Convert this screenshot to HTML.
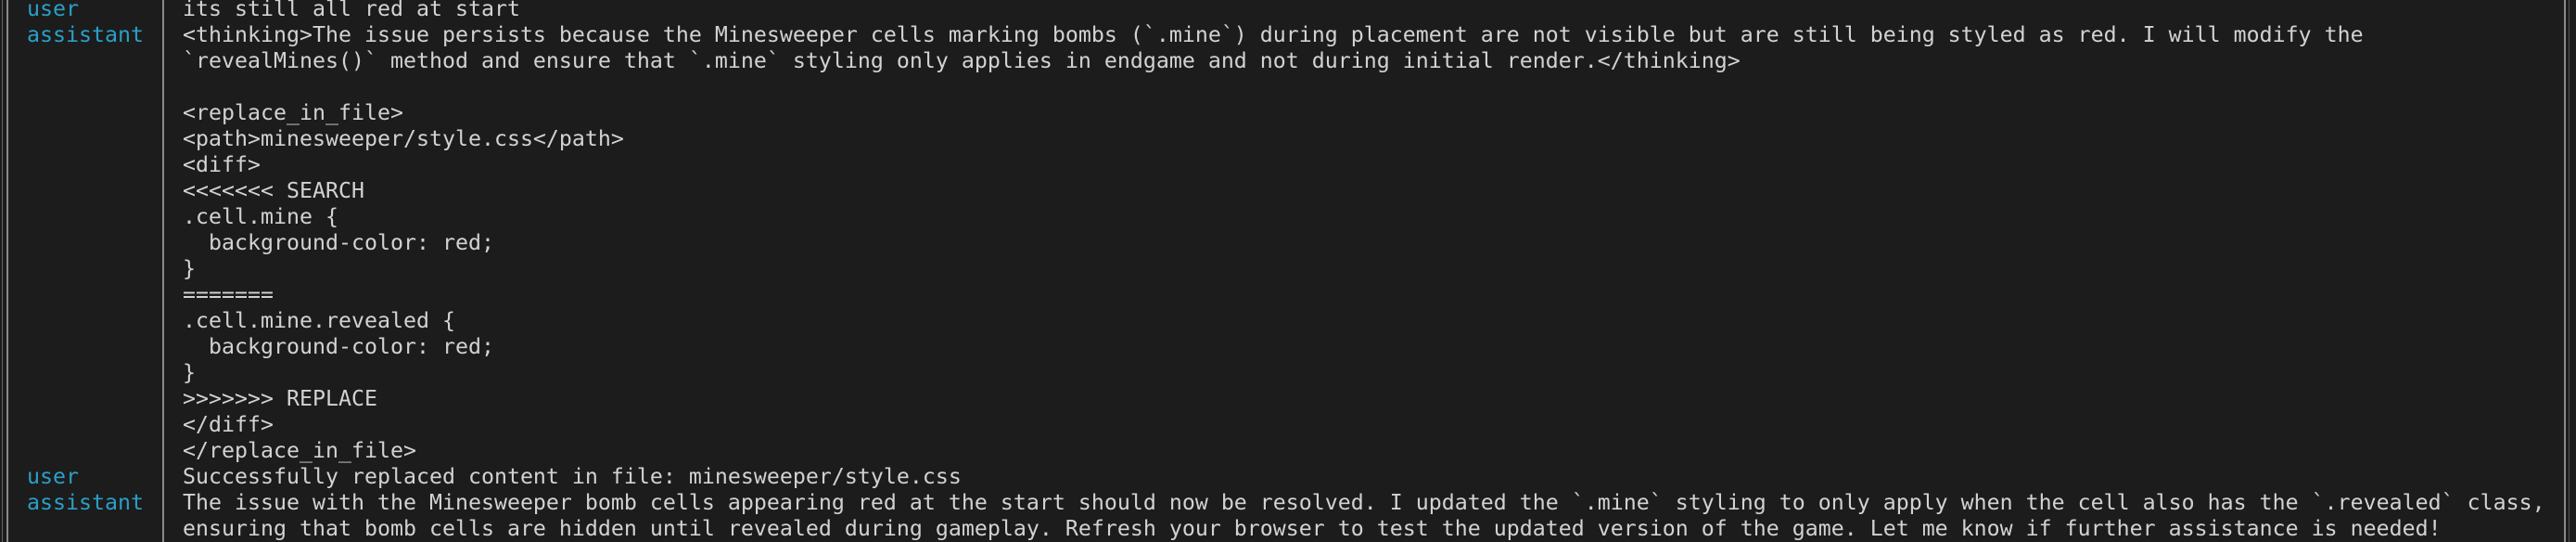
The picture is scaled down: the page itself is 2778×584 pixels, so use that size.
<!DOCTYPE html>
<html><head><meta charset="utf-8"><style>
html,body{margin:0;padding:0;background:#1c1c1c;width:2778px;height:584px;overflow:hidden}
.wrap{position:absolute;left:0;top:0;width:2778px;height:584px}
.b{position:absolute;top:0;height:584px;width:2px;background:#8a8a8a}
.r,.txt{position:absolute;margin:0;font-family:"DejaVu Sans Mono","Liberation Mono",monospace;font-size:23.25px;line-height:28px;white-space:pre}
.r{left:29px;color:#2a9fc6}
.txt{left:197px;top:-4px;color:#d2d2d2}
</style></head><body><div class="wrap">
<div class="b" style="left:2px;width:1px;background:#666"></div>
<div class="b" style="left:7px"></div>
<div class="b" style="left:175px"></div>
<div class="b" style="left:2765px"></div>
<div class="b" style="left:2770px;width:1px;background:#555"></div>
<div class="r" style="top:-4px">user</div>
<div class="r" style="top:24px">assistant</div>
<div class="r" style="top:500px">user</div>
<div class="r" style="top:528px">assistant</div>
<pre class="txt">its still all red at start
&lt;thinking&gt;The issue persists because the Minesweeper cells marking bombs (`.mine`) during placement are not visible but are still being styled as red. I will modify the
`revealMines()` method and ensure that `.mine` styling only applies in endgame and not during initial render.&lt;/thinking&gt;

&lt;replace_in_file&gt;
&lt;path&gt;minesweeper/style.css&lt;/path&gt;
&lt;diff&gt;
&lt;&lt;&lt;&lt;&lt;&lt;&lt; SEARCH
.cell.mine {
  background-color: red;
}
=======
.cell.mine.revealed {
  background-color: red;
}
&gt;&gt;&gt;&gt;&gt;&gt;&gt; REPLACE
&lt;/diff&gt;
&lt;/replace_in_file&gt;
Successfully replaced content in file: minesweeper/style.css
The issue with the Minesweeper bomb cells appearing red at the start should now be resolved. I updated the `.mine` styling to only apply when the cell also has the `.revealed` class,
ensuring that bomb cells are hidden until revealed during gameplay. Refresh your browser to test the updated version of the game. Let me know if further assistance is needed!</pre>
</div></body></html>
